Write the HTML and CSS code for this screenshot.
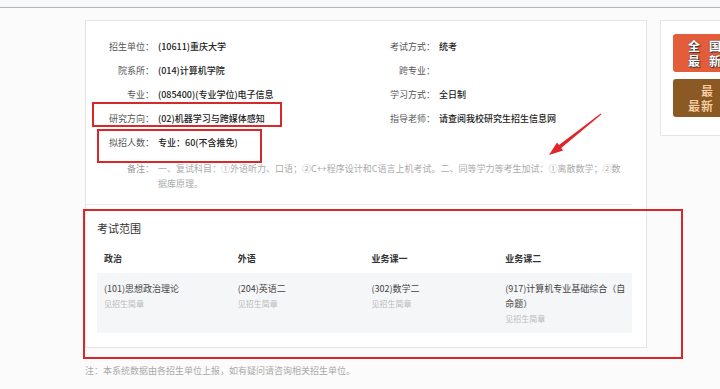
FILE: index.html
```html
<!DOCTYPE html>
<html lang="zh-CN">
<head>
    <meta charset="UTF-8">
    <meta name="viewport" content="width=device-width, initial-scale=1.0">
    <title>硕士专业目录</title>
    <link rel="stylesheet" href="styles.css">
</head>
<body>

<div class="topbar"></div>

<div class="page">
    <div class="main-card">
        <div class="info">
            <div class="info-grid">
                <div class="field"><span class="label">招生单位：</span><span class="value">(10611)重庆大学</span></div>
                <div class="field"><span class="label">考试方式：</span><span class="value">统考</span></div>

                <div class="field"><span class="label">院系所：</span><span class="value">(014)计算机学院</span></div>
                <div class="field"><span class="label">跨专业：</span><span class="value"></span></div>

                <div class="field"><span class="label">专业：</span><span class="value">(085400)(专业学位)电子信息</span></div>
                <div class="field"><span class="label">学习方式：</span><span class="value">全日制</span></div>

                <div class="field"><span class="label">研究方向：</span><span class="value">(02)机器学习与跨媒体感知</span></div>
                <div class="field"><span class="label">指导老师：</span><span class="value">请查阅我校研究生招生信息网</span></div>

                <div class="field"><span class="label">拟招人数：</span><span class="value">专业：60(不含推免)</span></div>
                <div class="field"></div>

                <div class="field note">
                    <span class="label">备注：</span>
                    <span class="value">一、复试科目：①外语听力、口语；②C++程序设计和C语言上机考试。二、同等学力等考生加试：①离散数学；②数据库原理。</span>
                </div>
            </div>
        </div>

        <div class="exam">
            <h3 class="exam-title">考试范围</h3>
            <table class="exam-table">
                <thead>
                <tr>
                    <th>政治</th>
                    <th>外语</th>
                    <th>业务课一</th>
                    <th>业务课二</th>
                </tr>
                </thead>
                <tbody>
                <tr>
                    <td>(101)思想政治理论<span class="sub">见招生简章</span></td>
                    <td>(204)英语二<span class="sub">见招生简章</span></td>
                    <td>(302)数学二<span class="sub">见招生简章</span></td>
                    <td><span class="nowrap">(917)计算机专业基础综合（自</span><br>命题）<span class="sub">见招生简章</span></td>
                </tr>
                </tbody>
            </table>
        </div>
    </div>

    <div class="side-card">
        <div class="banner banner-red">
            <span class="banner-line">全国</span>
            <span class="banner-line">最新</span>
        </div>
        <div class="banner banner-brown">
            <span class="banner-line indent">最</span>
            <span class="banner-line">最新</span>
        </div>
    </div>
</div>

<p class="footnote">注：本系统数据由各招生单位上报，如有疑问请咨询相关招生单位。</p>

<!-- annotations drawn over the page -->
<div class="mark mark-direction"></div>
<div class="mark mark-count"></div>
<div class="mark mark-exam"></div>

<svg class="arrow" width="66" height="52" viewBox="540 108 66 52">
    <polygon points="600.7,113.6 559,145.1 557,142.5 549,155 563.2,150.5 561.2,147.9 601.3,114.4" fill="#e0262a"/>
</svg>

</body>
</html>
```

FILE: styles.css
```css
* {
    margin: 0;
    padding: 0;
    box-sizing: border-box;
}

html, body {
    width: 720px;
    height: 389px;
    overflow: hidden;
}

body {
    position: relative;
    font-family: "Noto Sans CJK SC", "Liberation Sans", sans-serif;
    font-size: 9px;
    color: #333;
    background-color: #fbfbfb;
}

.topbar {
    height: 8px;
    background-color: #f6f8f9;
    border-bottom: 1px solid #b4b4b4;
}

.page {
    display: flex;
    align-items: flex-start;
    gap: 13px;
    padding: 12px 0 0 85px;
}

.main-card {
    width: 562px;
    flex-shrink: 0;
    background-color: #fff;
    border: 1px solid #e4e4e4;
    padding-right: 14px;
}

/* basic info */

.info {
    padding: 14px 0 13px 7px;
    border-bottom: 1px solid #ececec;
}

.info-grid {
    display: grid;
    grid-template-columns: 281px 1fr;
}

.field {
    display: flex;
    height: 24px;
    line-height: 24px;
    white-space: nowrap;
}

.label {
    width: 61px;
    flex-shrink: 0;
    text-align: right;
    color: #555;
}

.value {
    margin-left: 4px;
    color: #222;
    font-weight: 500;
}

.note {
    grid-column: 1 / -1;
    height: auto;
    margin-top: 6px;
    line-height: 15px;
    white-space: normal;
}

.note .label {
    color: #999;
}

.note .value {
    width: 468px;
    color: #aaa;
    font-weight: normal;
}

/* exam range */

.exam {
    padding: 15px 0 14px 11px;
}

.exam-title {
    font-size: 11px;
    font-weight: normal;
    line-height: 16px;
    color: #333;
}

.exam-table {
    width: 535px;
    margin-top: 7px;
    border-collapse: collapse;
    table-layout: fixed;
}

.exam-table th {
    height: 30px;
    padding: 0 7px;
    text-align: left;
    font-weight: bold;
    color: #333;
}

.exam-table td {
    padding: 8px 7px 7px;
    vertical-align: top;
    line-height: 15px;
    color: #444;
    background-color: #f5f6f7;
}

.nowrap {
    white-space: nowrap;
}

.sub {
    display: block;
    font-size: 8px;
    color: #bbb;
}

/* side */

.side-card {
    width: 60px;
    height: 116px;
    flex-shrink: 0;
    background-color: #fff;
    border: 1px solid #e6e6e6;
    border-right: none;
    padding: 13px 0 0 12px;
}

.banner {
    width: 48px;
    height: 38px;
    border-radius: 3px 0 0 3px;
    padding: 4px 0 0 15px;
    margin-bottom: 7px;
    overflow: hidden;
    font-size: 12px;
    font-weight: bold;
    line-height: 15px;
    white-space: nowrap;
}

.banner-line {
    display: block;
}

.banner-red {
    background-color: #e35d3b;
    color: #fff;
    letter-spacing: 9px;
    text-shadow: 0 0 1px #333, 1px 1px 1px #333;
}

.banner-brown {
    background-color: #8b5a24;
    color: #f8cfa2;
    letter-spacing: 1px;
    text-shadow: 0 0 1px #6a3a10;
}

.banner-brown .indent {
    padding-left: 13px;
}

.footnote {
    margin-top: 15px;
    padding-left: 85px;
    line-height: 15px;
    color: #aaa;
}

/* red annotations */

.mark {
    position: absolute;
    border: 2px solid #d8282a;
}

.mark-direction {
    left: 92px;
    top: 102px;
    width: 190px;
    height: 25px;
}

.mark-count {
    left: 97px;
    top: 129px;
    width: 165px;
    height: 34px;
}

.mark-exam {
    left: 83px;
    top: 209px;
    width: 600px;
    height: 150px;
}

.arrow {
    position: absolute;
    left: 540px;
    top: 108px;
}
```
